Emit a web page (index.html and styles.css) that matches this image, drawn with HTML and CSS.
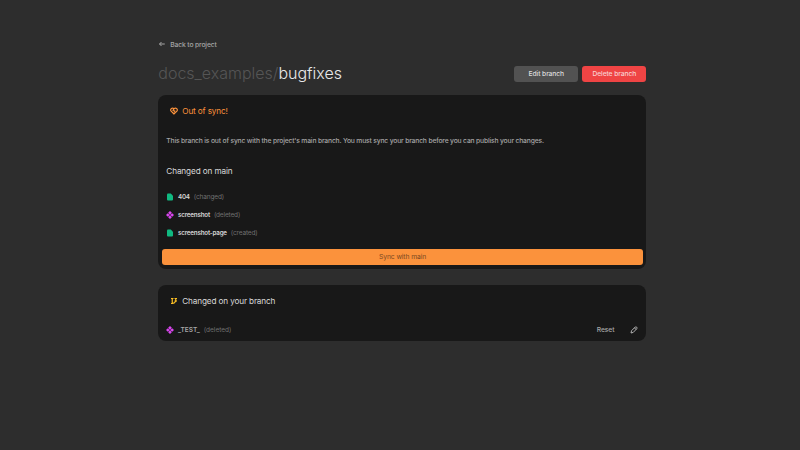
FILE: index.html
```
<!DOCTYPE html>
<html lang="en">
<head>
<meta charset="utf-8">
<title>docs_examples/bugfixes</title>
<link rel="stylesheet" href="styles.css">
</head>
<body>
<svg class="defs" width="0" height="0">
  <symbol id="page" viewBox="0 0 16 16"><path d="M4 1h5.500L14 5.500V13a2 2 0 0 1-2 2H4a2 2 0 0 1-2-2V3a2 2 0 0 1 2-2z"/></symbol>
  <symbol id="component" viewBox="0 0 16 16"><path d="M8 0l3.700 3.700L8 7.400 4.300 3.700zM3.700 4.300L7.400 8l-3.700 3.700L0 8zM12.300 4.300L16 8l-3.700 3.700L8.600 8zM8 8.600l3.700 3.700L8 16l-3.700-3.700z"/></symbol>
</svg>
<main class="container">
  <a class="back"><svg class="arrow" viewBox="0 0 16 16"><path d="M13.500 8H3M7 4L3 8l4 4"/></svg><span>Back to project</span></a>
  <header class="header">
    <h1 class="title"><span class="repo">docs_examples/</span><span class="branch">bugfixes</span></h1>
    <div class="actions">
      <button class="btn edit">Edit branch</button>
      <button class="btn delete">Delete branch</button>
    </div>
  </header>
  <section class="card sync">
    <h2 class="heading warning"><svg class="heart" viewBox="0 0 16 16"><path d="M8 14L2.300 8.300a3.700 3.700 0 0 1 5.200-5.200L8 3.600l.5-.5a3.700 3.700 0 0 1 5.200 5.200zM8 3.600L6 6.500l3.500 1.500L8 10.500"/></svg><span>Out of sync!</span></h2>
    <p class="message">This branch is out of sync with the project's main branch. You must sync your branch before you can publish your changes.</p>
    <h3 class="subheading">Changed on main</h3>
    <ul class="list">
      <li class="row"><svg class="icon page"><use href="#page"/></svg><b class="name">404</b><span class="state">(changed)</span></li>
      <li class="row"><svg class="icon component"><use href="#component"/></svg><b class="name">screenshot</b><span class="state">(deleted)</span></li>
      <li class="row"><svg class="icon page"><use href="#page"/></svg><b class="name">screenshot-page</b><span class="state">(created)</span></li>
    </ul>
    <button class="sync-btn">Sync with main</button>
  </section>
  <section class="card changes">
    <h2 class="heading"><svg class="branch-icon" viewBox="0 0 16 16"><path d="M4.500 3v10M4.500 12h4l3-4V3"/><path d="M2 3h5M2 13h5M9 3h5M9 8h5"/></svg><span>Changed on your branch</span></h2>
    <div class="row last"><svg class="icon component"><use href="#component"/></svg><span class="name test">_TEST_</span><span class="state wide">(deleted)</span><span class="reset">Reset</span><svg class="pencil" viewBox="0 0 16 16"><path d="M2 14l1-4.500 7.500-7.500q1.500-1 2.800.3t.4 2.900L6.500 12.800zM9 3.800L12.200 7"/></svg></div>
  </section>
</main>
</body>
</html>
```
FILE: styles.css
```
* { box-sizing: border-box; margin: 0; padding: 0; }
body { background: #2d2d2d; color: #d6d6d6; font-family: Inter, sans-serif; font-size: 6.75px; line-height: 8px; letter-spacing: -.14px; }
.defs { display: none; }
.container { width: 488px; margin-left: 158.3px; padding-top: 40px; white-space: nowrap; }
.back { display: flex; align-items: center; gap: 4px; height: 8px; color: #a6a6a6; font-weight: 500; }
.back span { position: relative; top: .5px; }
.arrow { width: 8px; height: 8px; fill: none; stroke: currentColor; stroke-width: 2; }
.header { display: flex; justify-content: space-between; align-items: center; height: 20px; margin-top: 15.700px; }
.title { margin-top: -1px; font-size: 16px; line-height: 20px; font-weight: 300; letter-spacing: 0; }
.repo { color: #555; }
.branch { color: #e9e9e9; }
.actions { display: flex; gap: 4px; }
.btn { width: 64px; height: 16px; border: 0; border-radius: 3px; color: #ddd; font: 500 6.75px/16px Inter, sans-serif; letter-spacing: -.1px; }
.edit { background: #525252; }
.delete { background: #ef4444; color: #f8d0d0; }
.card { background: #181818; border-radius: 8px; }
.sync { height: 173.500px; margin-top: 11.700px; padding: 4px; }
.heading { display: flex; align-items: center; gap: 3.800px; height: 24px; padding-left: 8.200px; color: #d8d8d8; font-size: 8.200px; font-weight: 400; letter-spacing: -.14px; }
.warning { color: #fb923c; }
.heart, .branch-icon { width: 8px; height: 8px; fill: none; stroke: currentColor; stroke-width: 2.4; }
.branch-icon { color: #fbbf24; }
.message { margin: 13.500px 4px 0; height: 8px; color: #a6a6a6; font-weight: 500; letter-spacing: -.168px; }
.subheading { margin: 21px 4px 0; height: 10px; color: #d8d8d8; font-size: 8.200px; line-height: 10px; font-weight: 400; letter-spacing: -.12px; }
.list { margin-top: 12.400px; list-style: none; }
.row { display: flex; align-items: center; height: 18px; padding-left: 4px; }
.icon { width: 8px; height: 8px; margin-right: 3.700px; fill: currentColor; }
.page { color: #10b981; }
.component { color: #d946ef; }
.name { color: #d6d6d6; font-size: 6.25px; font-weight: 600; letter-spacing: -.2px; }
.state { margin-left: 4px; color: #707070; font-size: 6.5px; letter-spacing: -.15px; }
.wide { letter-spacing: 0; }
.sync-btn { display: block; width: 480.500px; height: 16px; margin-top: 6.600px; border: 0; border-radius: 3px; background: #fb923c; color: #7c4a22; font: 400 6.75px/16px Inter, sans-serif; letter-spacing: -.1px; }
.changes { height: 56px; margin-top: 16.200px; padding: 4px; }
.last { margin-top: 7.500px; }
.test { color: #a6a6a6; font-size: 6.5px; letter-spacing: -.05px; }
.reset { margin-left: auto; color: #a6a6a6; font-weight: 500; }
.pencil { width: 8px; height: 8px; margin: 0 4px 0 16px; fill: none; stroke: #b0b0b0; stroke-width: 2; }
```
